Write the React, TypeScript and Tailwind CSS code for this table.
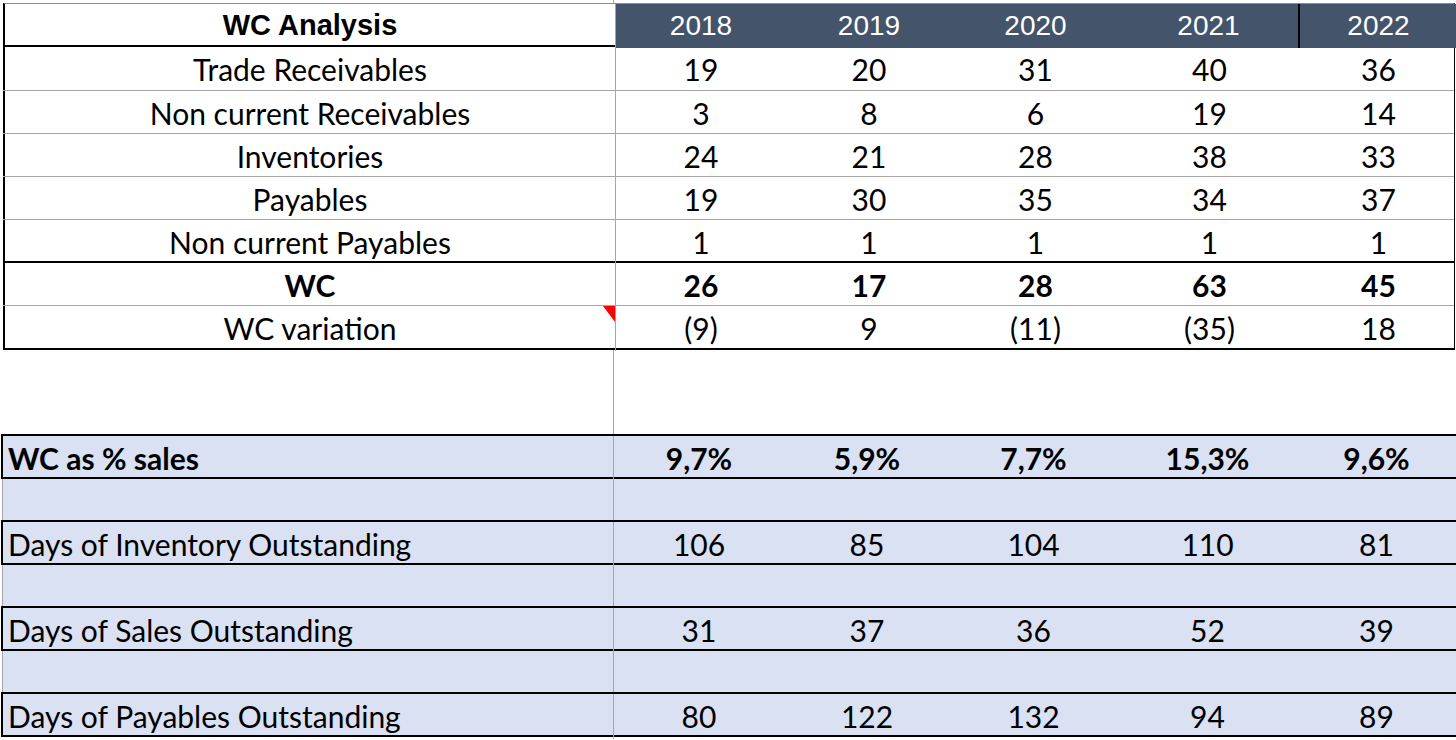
import React from "react";

const years = ["2018", "2019", "2020", "2021", "2022"];

const topRows = [
  { label: "Trade Receivables", values: ["19", "20", "31", "40", "36"], h: "h-[44px]" },
  { label: "Non current Receivables", values: ["3", "8", "6", "19", "14"], h: "h-[43px]" },
  { label: "Inventories", values: ["24", "21", "28", "38", "33"], h: "h-[43px]" },
  { label: "Payables", values: ["19", "30", "35", "34", "37"], h: "h-[43px]" },
  { label: "Non current Payables", values: ["1", "1", "1", "1", "1"], h: "h-[43px]", dark: true },
  { label: "WC", values: ["26", "17", "28", "63", "45"], h: "h-[43px]", bold: true },
  { label: "WC variation", values: ["(9)", "9", "(11)", "(35)", "18"], h: "h-[44px]", dark: true, note: true },
];

const ratioRows = [
  { label: "WC as % sales", values: ["9,7%", "5,9%", "7,7%", "15,3%", "9,6%"], bold: true },
  { label: "Days of Inventory Outstanding", values: ["106", "85", "104", "110", "81"] },
  { label: "Days of Sales Outstanding", values: ["31", "37", "36", "52", "39"] },
  { label: "Days of Payables Outstanding", values: ["80", "122", "132", "94", "89"] },
];

const grid = "grid grid-cols-[611px_170px_166px_167px_181px_157px]";
const body = "font-['Lato','Open_Sans',sans-serif] text-[30px] text-black";

function Spacer({ h }: { h: string }) {
  return (
    <div className={`${grid} ${h} pl-[3px]`}>
      <div className="border-r border-[#a6a6a6]" />
    </div>
  );
}

export default function App() {
  return (
    <div className="w-[1456px] h-[740px] bg-white overflow-hidden">
      <Spacer h="h-[3px]" />

      {/* top table */}
      <div className="ml-[3px] w-[1452px] border-l-2 border-r border-t border-l-black border-r-black border-t-[#8c8c8c]">
        <div className={`${grid} h-[43px] border-b-2 border-black -ml-[2px] pl-[2px]`}>
          <div className="flex items-center justify-center border-r border-[#a6a6a6] font-['Liberation_Sans',Arial,sans-serif] font-bold text-[29px]">
            WC Analysis
          </div>
          {years.map((y, i) => (
            <div
              key={y}
              className={`flex items-center justify-center bg-[#44546a] text-white font-['Liberation_Sans',Arial,sans-serif] text-[28px] ${
                i === 3 ? "border-r-2 border-black" : ""
              }`}
            >
              {y}
            </div>
          ))}
        </div>

        {topRows.map((r) => (
          <div
            key={r.label}
            className={`${grid} ${r.h} ${r.dark ? "border-b-2 border-black" : "border-b border-[#a6a6a6]"} -ml-[2px] pl-[2px] ${body} ${
              r.bold ? "font-bold" : ""
            }`}
          >
            <div className="relative flex items-center justify-center border-r border-[#a6a6a6]">
              {r.label}
              {r.note && (
                <div className="absolute right-0 top-0 w-0 h-0 border-t-[16px] border-l-[12px] border-t-[#ff0000] border-l-transparent" />
              )}
            </div>
            {r.values.map((v, i) => (
              <div key={i} className="flex items-center justify-center">
                {v}
              </div>
            ))}
          </div>
        ))}
      </div>

      <Spacer h="h-[84px]" />

      {/* ratio table */}
      <div className={`ml-[3px] ${body}`}>
        {ratioRows.map((r, idx) => (
          <div key={r.label}>
            <div
              className={`${grid} h-[45px] bg-[#d9e1f2] border-y-2 border-l-2 border-black -ml-[2px] ${r.bold ? "font-bold" : ""}`}
            >
              <div className="flex items-center pl-[5px] border-r border-[#a6a6a6]">{r.label}</div>
              {r.values.map((v, i) => (
                <div key={i} className="flex items-center justify-center">
                  {v}
                </div>
              ))}
            </div>
            {idx < ratioRows.length - 1 && (
              <div className={`${grid} h-[41px] bg-[#d9e1f2] border-l border-[#a6a6a6] -ml-[1px]`}>
                <div className="border-r border-[#a6a6a6]" />
              </div>
            )}
          </div>
        ))}
      </div>
    </div>
  );
}
